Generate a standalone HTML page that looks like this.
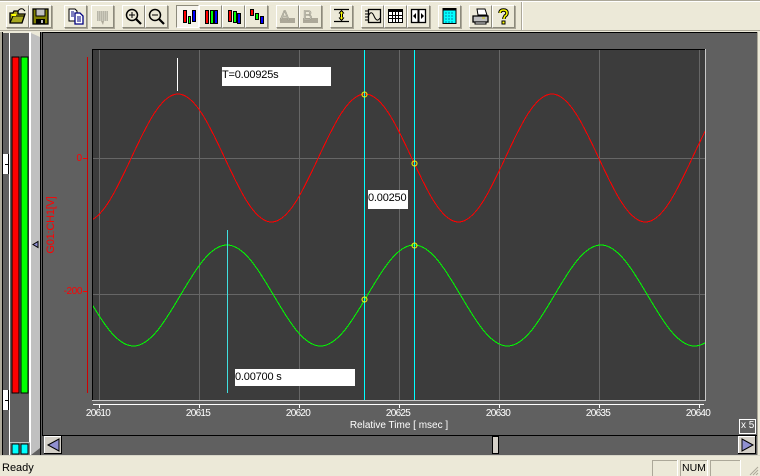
<!DOCTYPE html>
<html><head><meta charset="utf-8"><style>
html,body{margin:0;padding:0}
body{width:760px;height:476px;overflow:hidden;background:#ece9d8;position:relative;font-family:"Liberation Sans",sans-serif}
.a{position:absolute}
.b{position:absolute;top:5px;width:21px;height:21px;background:#ece9d8;border:1px solid;border-color:#fff #8c8a7c #8c8a7c #fff;box-shadow:1px 1px 0 #aca899}
.b svg{position:absolute;left:0;top:0}
.b.p{background:#f6f4ec;border-color:#8c8a7c #fff #fff #8c8a7c;box-shadow:none}
.l{position:absolute;font-size:10px;letter-spacing:-.7px;color:#fff;line-height:12px;white-space:nowrap;transform:translateX(-50%);top:408px}
.box{position:absolute;background:#fff;color:#000;font-size:11px;letter-spacing:-.2px;line-height:16px;white-space:nowrap}
</style></head><body>
<!-- toolbar -->
<div class="a" style="left:0;top:0;width:760px;height:1px;background:#aca899"></div>
<div class="a" style="left:0;top:1px;width:760px;height:1px;background:#fff"></div>
<div class="a" style="left:0;top:30px;width:760px;height:1px;background:#aca899"></div>
<div class="a" style="left:521px;top:2px;width:1px;height:28px;background:#aca899"></div>
<div class="a" style="left:522px;top:2px;width:1px;height:28px;background:#fff"></div>
<div class="b" style="left:6px"><svg width="21" height="21"><path d="M3 17V7h3l1-2h4v3h7l-3 9z" fill="#a8a820" stroke="#000" stroke-width="1.300"/><path d="M3 17l3-7h11" fill="none" stroke="#000"/><path d="M4 8h5v2H5z" fill="#ff0"/><path d="M11 5q2-3 5-2l2 2" fill="none" stroke="#000"/></svg></div>
<div class="b" style="left:29px"><svg width="21" height="21"><rect x="3" y="3" width="15" height="15" fill="#808000" stroke="#000" stroke-width="1.300"/><rect x="6" y="3" width="9" height="7" fill="#c0c0c0" stroke="#000"/><rect x="6" y="13" width="9" height="5" fill="#000"/><rect x="11" y="14" width="2" height="3" fill="#c0c0c0"/></svg></div>
<div class="b" style="left:64px"><svg width="21" height="21"><path d="M4 3h6l2 2v10H4z" fill="#fff" stroke="#000"/><path d="M10 7h5l3 3v8H10z" fill="#fff" stroke="#000080" stroke-width="1.300"/><path d="M6 6h3M6 8h3M6 10h3M12 11h4M12 13h4M12 15h4" stroke="#000080"/></svg></div>
<div class="b" style="left:91px"><svg width="21" height="21"><rect x="5" y="5" width="11" height="10" fill="#b8b6a8"/><path d="M6 6h9M6 8h9M6 10h9M6 12h9M6 14h9" stroke="#e0ded0" stroke-dasharray="1 1"/><path d="M9 15h3l-1 4z" fill="#aca899"/></svg></div>
<div class="b" style="left:122px"><svg width="21" height="21"><circle cx="9" cy="9" r="5.500" fill="#ece9d8" stroke="#000" stroke-width="1.500"/><path d="M6 9h6M9 6v6" stroke="#000"/><path d="M13 13l5 5" stroke="#000" stroke-width="2.200"/></svg></div>
<div class="b" style="left:145px"><svg width="21" height="21"><circle cx="9" cy="9" r="5.500" fill="#ece9d8" stroke="#000" stroke-width="1.500"/><path d="M6 9h6" stroke="#000"/><path d="M13 13l5 5" stroke="#000" stroke-width="2.200"/></svg></div>
<div class="b p" style="left:176px"><svg width="21" height="21"><rect x="6.500" y="4.500" width="3" height="12" fill="#f00" stroke="#000"/><rect x="11.500" y="10.500" width="2" height="7" fill="#0f0" stroke="#000"/><rect x="15.500" y="4.500" width="3" height="11" fill="#00f" stroke="#000"/></svg></div>
<div class="b" style="left:199px"><svg width="21" height="21"><rect x="5.500" y="4.500" width="3" height="13" fill="#f00" stroke="#000"/><rect x="10.500" y="4.500" width="3" height="13" fill="#0f0" stroke="#000"/><rect x="14.500" y="4.500" width="3" height="13" fill="#00f" stroke="#000"/></svg></div>
<div class="b" style="left:222px"><svg width="21" height="21"><rect x="5.500" y="4.500" width="3" height="11" fill="#f00" stroke="#000"/><rect x="10.500" y="5.500" width="3" height="11" fill="#0f0" stroke="#000"/><rect x="14.500" y="7.500" width="3" height="10" fill="#00f" stroke="#000"/></svg></div>
<div class="b" style="left:245px"><svg width="21" height="21"><rect x="4.500" y="3.500" width="3" height="6" fill="#f00" stroke="#000"/><rect x="9.500" y="7.500" width="3" height="6" fill="#0f0" stroke="#000"/><rect x="14.500" y="10.500" width="3" height="7" fill="#00f" stroke="#000"/></svg></div>
<div class="b" style="left:276px"><svg width="21" height="21"><rect x="3" y="12" width="15" height="5" fill="#aca899"/><text x="3" y="14" font-size="14" fill="#d0cec0" stroke="#9c9a8c" stroke-width=".6" font-family="Liberation Sans">A</text></svg></div>
<div class="b" style="left:299px"><svg width="21" height="21"><rect x="3" y="12" width="15" height="5" fill="#aca899"/><text x="3" y="14" font-size="14" fill="#d0cec0" stroke="#9c9a8c" stroke-width=".6" font-family="Liberation Sans">B</text></svg></div>
<div class="b" style="left:330px"><svg width="21" height="21"><path d="M3 3.500h15M3 15.500h15" stroke="#000" stroke-width="1.200"/><path d="M10.500 5v9" stroke="#000" stroke-width="3"/><path d="M10.500 5v9" stroke="#ff0"/><path d="M8 7.500l2.500-3 2.500 3M8 11.500l2.500 3 2.500-3" fill="#ff0" stroke="#000"/></svg></div>
<div class="b" style="left:361px"><svg width="21" height="21"><rect x="6.500" y="3.500" width="12" height="13" fill="#ece9d8" stroke="#000" stroke-width="1.300"/><path d="M3 5h3M3 8h3M3 11h3M3 14h3" stroke="#000"/><path d="M6 11q3-8 6-1t6 2" fill="none" stroke="#000"/></svg></div>
<div class="b" style="left:384px"><svg width="21" height="21"><rect x="3.500" y="3.500" width="14" height="13" fill="#fff" stroke="#000"/><rect x="3" y="3" width="15" height="3" fill="#000"/><path d="M7.500 6v10M10.500 6v10M13.500 6v10M4 9.500h13M4 12.500h13" stroke="#000"/></svg></div>
<div class="b" style="left:407px"><svg width="21" height="21"><rect x="3.500" y="3.500" width="14" height="13" fill="#fff" stroke="#000" stroke-width="1.300"/><path d="M10.500 3v14" stroke="#000" stroke-width="2"/><path d="M5 10l3-3v6zM16 10l-3-3v6z" fill="#000"/></svg></div>
<div class="b" style="left:438px"><svg width="21" height="21"><rect x="4" y="2.500" width="13" height="15" fill="#0ff" stroke="#000"/><rect x="4" y="2.500" width="13" height="2" fill="#000"/><path d="M6 7h9M6 10h9M6 13h9M6 16h9" stroke="#08a" stroke-dasharray="2 1"/></svg></div>
<div class="b" style="left:469px"><svg width="21" height="21"><path d="M7 3h8l2 6H8z" fill="#fff" stroke="#000"/><path d="M3 10h15v6H3z" fill="#c0c0c0" stroke="#000" stroke-width="1.300"/><path d="M5 16h11v2H5z" fill="#fff" stroke="#000"/><path d="M12 12h3" stroke="#cc0"/></svg></div>
<div class="b" style="left:492px"><svg width="21" height="21"><path d="M7 7q0-3 3.500-3t3.500 3q0 2-2 3l-1 2v1" fill="none" stroke="#000" stroke-width="3.500"/><path d="M7 7q0-3 3.500-3t3.500 3q0 2-2 3l-1 2v1" fill="none" stroke="#ff0" stroke-width="1.500"/><rect x="9" y="15" width="3" height="3" fill="#ff0" stroke="#000"/></svg></div>

<!-- main -->
<svg class="a" style="left:0;top:0" width="760" height="476" xmlns="http://www.w3.org/2000/svg">
<defs><clipPath id="c"><rect x="93" y="50" width="612" height="350"/></clipPath></defs>
<rect x="0" y="31" width="760" height="1" fill="#ece9d8"/>
<rect x="0" y="32" width="2" height="424" fill="#aca899"/>
<rect x="2" y="32" width="1" height="424" fill="#000"/>
<rect x="3" y="33" width="6" height="423" fill="#606060"/>
<rect x="9" y="33" width="1" height="423" fill="#fff"/>
<rect x="10" y="33" width="20" height="423" fill="#606060"/>
<rect x="29" y="32" width="2" height="424" fill="#fff"/>
<path d="M31 33l9 4V448l-9 7z" fill="#c0c0c0"/>
<path d="M40 448l-9 7h9z" fill="#606060"/>
<rect x="40" y="32" width="1" height="424" fill="#000"/>
<rect x="41" y="32" width="1" height="424" fill="#606060"/>
<rect x="42" y="32" width="715" height="424" fill="#606060"/>
<rect x="42" y="32" width="715" height="1" fill="#000"/>
<rect x="42" y="32" width="1" height="404" fill="#000"/>
<rect x="757" y="32" width="1" height="424" fill="#aca899"/>
<rect x="758" y="32" width="2" height="424" fill="#ece9d8"/>
<rect x="42" y="435" width="715" height="1" fill="#000"/>
<rect x="0" y="455" width="760" height="1" fill="#d8d6c8"/>
<!-- bars -->
<rect x="12" y="57" width="7" height="336" fill="#f00" stroke="#000" stroke-width="1" shape-rendering="crispEdges"/>
<rect x="21" y="57" width="7" height="336" fill="#0f0" stroke="#000" stroke-width="1" shape-rendering="crispEdges"/>
<rect x="3" y="154" width="5" height="20" fill="#fff"/><rect x="8" y="154" width="1" height="20" fill="#000"/><path d="M5 164.500h3" stroke="#000"/>
<rect x="3" y="390" width="5" height="20" fill="#fff"/><rect x="8" y="390" width="1" height="20" fill="#000"/><path d="M5 400.500h3" stroke="#000"/>
<rect x="10" y="442" width="20" height="13" fill="#808080"/>
<rect x="10" y="442" width="20" height="1" fill="#c0c0c0"/>
<rect x="12" y="444" width="7" height="10" fill="#0ff" stroke="#000" shape-rendering="crispEdges"/>
<rect x="21" y="444" width="7" height="10" fill="#0ff" stroke="#000" shape-rendering="crispEdges"/>
<path d="M33 244.500l5-3v6z" fill="#8f8fd0" stroke="#000"/>
<!-- plot -->
<rect x="92" y="49" width="614" height="352" fill="#3c3c3c"/>
<rect x="92" y="49" width="614" height="1" fill="#000"/>
<rect x="92" y="49" width="1" height="352" fill="#000"/>
<rect x="705" y="49" width="1" height="352" fill="#c8c8c8"/>
<rect x="92" y="400" width="614" height="1" fill="#c8c8c8"/>
<g fill="#666">
<rect x="99" y="50" width="1" height="350"/><rect x="199" y="50" width="1" height="350"/><rect x="299" y="50" width="1" height="350"/><rect x="399" y="50" width="1" height="350"/><rect x="499" y="50" width="1" height="350"/><rect x="599" y="50" width="1" height="350"/><rect x="699" y="50" width="1" height="350"/>
<rect x="93" y="158" width="612" height="1"/><rect x="93" y="294" width="612" height="1"/>
</g>
<g clip-path="url(#c)" fill="none" stroke-width="1" shape-rendering="crispEdges">
<path stroke="#f00" d="M-9 94C25 94 50.500 222 84.500 222C118.500 222 144 94 178 94C212 94 237.500 222 271.500 222C305.500 222 331 94 365 94C399 94 424.500 222 458.500 222C492.500 222 518 94 552 94C586 94 611.500 222 645.500 222C679.500 222 705 94 739 94"/>
<path stroke="#0f0" d="M40 245C74 245 99.500 346 133.500 346C167.500 346 193 245 227 245C261 245 286.500 346 320.500 346C354.500 346 380 245 414 245C448 245 473.500 346 507.500 346C541.500 346 567 245 601 245C635 245 660.500 346 694.500 346C728.500 346 754 245 788 245"/>
</g>
<rect x="177" y="58" width="1" height="33" fill="#fff"/>
<rect x="227" y="230" width="1" height="163" fill="#40e0e0"/>
<rect x="364" y="50" width="1" height="350" fill="#0ff"/>
<rect x="414" y="50" width="1" height="350" fill="#0ff"/>
<g fill="none" stroke="#ff0" stroke-width="1"><circle cx="364.500" cy="94.500" r="2.500"/><circle cx="414.500" cy="163.500" r="2.500"/><circle cx="364.500" cy="299.500" r="2.500"/><circle cx="414.500" cy="245.500" r="2.500"/></g>
<!-- y axis -->
<rect x="87" y="57" width="1" height="336" fill="#d00000"/>
<rect x="83" y="158" width="4" height="1" fill="#f00"/>
<rect x="83" y="291" width="4" height="1" fill="#f00"/>
<!-- x axis -->
<rect x="93" y="404" width="611" height="1" fill="#fff"/>
<g fill="#fff"><rect x="99" y="404" width="1" height="4"/><rect x="199" y="404" width="1" height="4"/><rect x="299" y="404" width="1" height="4"/><rect x="399" y="404" width="1" height="4"/><rect x="499" y="404" width="1" height="4"/><rect x="599" y="404" width="1" height="4"/><rect x="699" y="404" width="1" height="4"/></g>
<!-- scroll -->
<rect x="44" y="436" width="18" height="18" fill="#d4d0c8"/>
<path d="M44.500 454V436.500H62" fill="none" stroke="#fff"/><path d="M61.500 436V453.500H44" fill="none" stroke="#000"/>
<path d="M48 445l11-6v12z" fill="#9090d0" stroke="#000"/>
<rect x="738" y="436" width="18" height="18" fill="#d4d0c8"/>
<path d="M738.500 454V436.500H756" fill="none" stroke="#fff"/><path d="M755.500 436V453.500H738" fill="none" stroke="#000"/>
<path d="M753 445l-11-6v12z" fill="#9090d0" stroke="#000"/>
<rect x="492.500" y="436.500" width="6" height="17" fill="#d4d0c8" stroke="#000" stroke-width="1" shape-rendering="crispEdges"/>
<rect x="739.500" y="419.500" width="16" height="14" fill="#606060" stroke="#fff"/>
<!-- status panels -->
<g>
<rect x="652" y="460" width="25" height="1" fill="#aca899"/><rect x="652" y="460" width="1" height="16" fill="#aca899"/><rect x="677" y="460" width="1" height="16" fill="#fff"/>
<rect x="680" y="460" width="27" height="1" fill="#aca899"/><rect x="680" y="460" width="1" height="16" fill="#aca899"/><rect x="707" y="460" width="1" height="16" fill="#fff"/>
<rect x="710" y="460" width="30" height="1" fill="#aca899"/><rect x="710" y="460" width="1" height="16" fill="#aca899"/><rect x="740" y="460" width="1" height="16" fill="#fff"/>
</g>
<path d="M750 475l8-8M753 475l5-5M756 475l2-2" stroke="#aca899"/>
</svg>
<div class="l" style="left:98px">20610</div><div class="l" style="left:198px">20615</div><div class="l" style="left:298px">20620</div><div class="l" style="left:398px">20625</div><div class="l" style="left:498px">20630</div><div class="l" style="left:598px">20635</div><div class="l" style="left:698px">20640</div>
<div class="l" style="left:399px;top:420px;letter-spacing:0">Relative Time [ msec ]</div>
<div class="a" style="left:741px;top:420px;font-size:10px;line-height:12px;color:#fff">x 5</div>
<div class="a" style="left:60px;top:153px;width:22px;text-align:right;font-size:10px;line-height:12px;color:#f00">0</div>
<div class="a" style="left:55px;top:286px;width:27px;text-align:right;font-size:10px;letter-spacing:-.4px;line-height:12px;color:#f00">-200</div>
<div class="a" style="left:51px;top:225px;font-size:11px;letter-spacing:-.2px;line-height:12px;color:#f00;white-space:nowrap;transform:translate(-50%,-50%) rotate(-90deg)">G01:CH1[V]</div>
<div class="box" style="left:222px;top:67px;width:109px;height:19px">T=0.00925s</div>
<div class="box" style="left:368px;top:190px;width:40px;height:19px;line-height:17px">0.00250</div>
<div class="box" style="left:235px;top:369px;width:120px;height:17px">0.00700 s</div>
<div class="a" style="left:2px;top:461px;font-size:11px;line-height:14px;color:#000">Ready</div>
<div class="a" style="left:682px;top:461px;font-size:10.500px;line-height:14px;color:#000">NUM</div>
</body></html>
